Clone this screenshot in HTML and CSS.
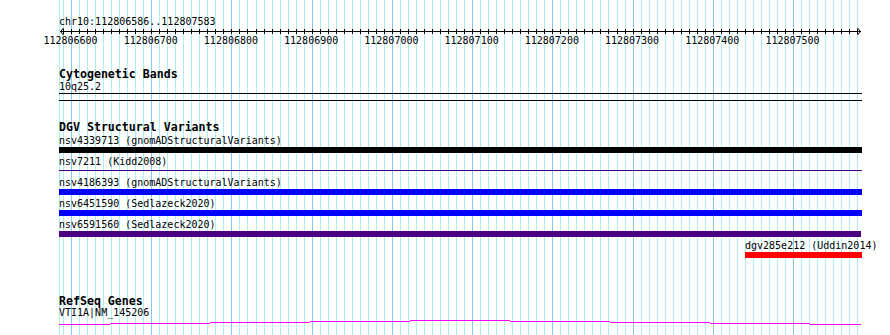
FILE: index.html
```html
<!DOCTYPE html>
<html lang="en">
<head>
    <meta charset="UTF-8">
    <title>chr10:112806586..112807583</title>
<link rel="stylesheet" href="styles.css">
</head>
<body>

<div id="panel">
    <svg id="grid" width="890" height="335"></svg>

    <svg id="ruler" width="890" height="69">
        <text class="ruler-text" x="59" y="25">chr10:112806586..112807583</text>
        <g id="ticks"></g>
        <path class="ruler-line" d="M60 31.5H861 M63.5 28L60.5 31.5L63.5 35 M857.5 28L860.5 31.5L857.5 35"/>
        <g id="ruler-labels"></g>
    </svg>

    <div class="track">
        <div class="track-title">Cytogenetic Bands</div>
        <div class="band-label">10q25.2</div>
        <div class="band"></div>
    </div>

    <div class="track dgv">
        <div class="track-title">DGV Structural Variants</div>
        <div class="feature">
            <div class="feature-label">nsv4339713 (gnomADStructuralVariants)</div>
            <div class="bar black" style="margin-left:0;width:803px"></div>
        </div>
        <div class="feature">
            <div class="feature-label">nsv7211 (Kidd2008)</div>
            <div class="bar-slot"><div class="line indigo" style="margin-left:0;width:803px"></div></div>
        </div>
        <div class="feature">
            <div class="feature-label">nsv4186393 (gnomADStructuralVariants)</div>
            <div class="bar blue" style="margin-left:0;width:803px"></div>
        </div>
        <div class="feature">
            <div class="feature-label">nsv6451590 (Sedlazeck2020)</div>
            <div class="bar blue" style="margin-left:0;width:803px"></div>
        </div>
        <div class="feature">
            <div class="feature-label">nsv6591560 (Sedlazeck2020)</div>
            <div class="bar indigo" style="margin-left:0;width:802px"></div>
        </div>
        <div class="feature">
            <div class="feature-label" style="margin-left:686px">dgv285e212 (Uddin2014)</div>
            <div class="bar red" style="margin-left:686px;width:117px"></div>
        </div>
    </div>

    <div class="track refseq">
        <div class="track-title">RefSeq Genes</div>
        <div class="gene-label">VTI1A|NM_145206</div>
        <svg class="gene" width="803" height="6">
            <path d="M0 5.5H51 M51 4.5H151 M151 3.5H251 M251 2.5H351 M351 1.5H451 M451 2.5H551 M551 3.5H651 M651 4.5H751 M751 5.5H802"/>
        </svg>
    </div>
</div>

<script type="text/javascript">
var NS = 'http://www.w3.org/2000/svg';
var start = 112806600;
var x0 = 71;
var scale = 0.80222; // px per bp

function bpToX(bp) {
    return Math.round(x0 + (bp - start) * scale);
}

function rect(parent, x, y, w, h, cls) {
    var r = document.createElementNS(NS, 'rect');
    r.setAttribute('x', x);
    r.setAttribute('y', y);
    r.setAttribute('width', w);
    r.setAttribute('height', h);
    r.setAttribute('class', cls);
    parent.appendChild(r);
}

var grid = document.getElementById('grid');
var ticks = document.getElementById('ticks');
var labels = document.getElementById('ruler-labels');

rect(grid, 59, 0, 1, 335, 'minor');
for (var k = -1; k <= 98; k++) {
    var x = bpToX(start + k * 10);
    rect(grid, x, 0, 1, 335, k % 10 === 0 ? 'major' : 'minor');
    rect(ticks, x, 29, 1, 5, 'tick');
}

for (var i = 0; i <= 9; i++) {
    var t = document.createElementNS(NS, 'text');
    t.setAttribute('x', x0 + i * 100 * scale - 0.5);
    t.setAttribute('y', 44);
    t.setAttribute('class', 'ruler-text');
    t.setAttribute('text-anchor', 'middle');
    t.textContent = start + i * 100;
    labels.appendChild(t);
}
</script>
</body>
</html>
```

FILE: styles.css
```css
body {
    margin: 0;
    background-color: #FFF;
}
#panel {
    position: relative;
    width: 890px;
    height: 335px;
    overflow: hidden;
    font-family: "DejaVu Sans Mono", monospace;
    font-size: 10px;
    color: #000;
}
#grid {
    position: absolute;
    left: 0;
    top: 0;
}
#grid .minor {
    fill: #AFEEEE;
}
#grid .major {
    fill: #87C8F0;
}
#ruler {
    display: block;
    position: relative;
}
.ruler-text {
    font-family: "DejaVu Sans Mono", monospace;
    font-size: 10px;
    fill: #000;
}
.tick {
    fill: #000;
}
.ruler-line {
    fill: none;
    stroke: #000;
    stroke-width: 1;
}
.track {
    position: relative;
    margin-left: 59px;
    width: 803px;
}
.track.dgv {
    margin-top: 21px;
}
.track.refseq {
    margin-top: 38px;
}
.track-title {
    height: 10px;
    line-height: 10px;
    font-size: 11.6px;
    font-weight: bold;
    white-space: nowrap;
}
.band-label {
    height: 13px;
    padding-top: 1px;
    line-height: 13px;
    white-space: nowrap;
}
.band {
    height: 6px;
    border-top: 1px solid #000;
    border-bottom: 1px solid #000;
}
.feature-label {
    height: 13px;
    padding-top: 2px;
    line-height: 13px;
    white-space: nowrap;
}
.bar {
    height: 6px;
}
.bar-slot {
    height: 6px;
    padding-top: 2px;
    box-sizing: border-box;
}
.line {
    height: 1px;
}
.black {
    background-color: #000;
}
.blue {
    background-color: #0000FF;
}
.indigo {
    background-color: #4B0082;
}
.red {
    background-color: #FF0000;
}
.gene-label {
    height: 13px;
    line-height: 13px;
    white-space: nowrap;
}
.gene {
    display: block;
}
.gene path {
    fill: none;
    stroke: #FF00FF;
    stroke-width: 1;
}
```
